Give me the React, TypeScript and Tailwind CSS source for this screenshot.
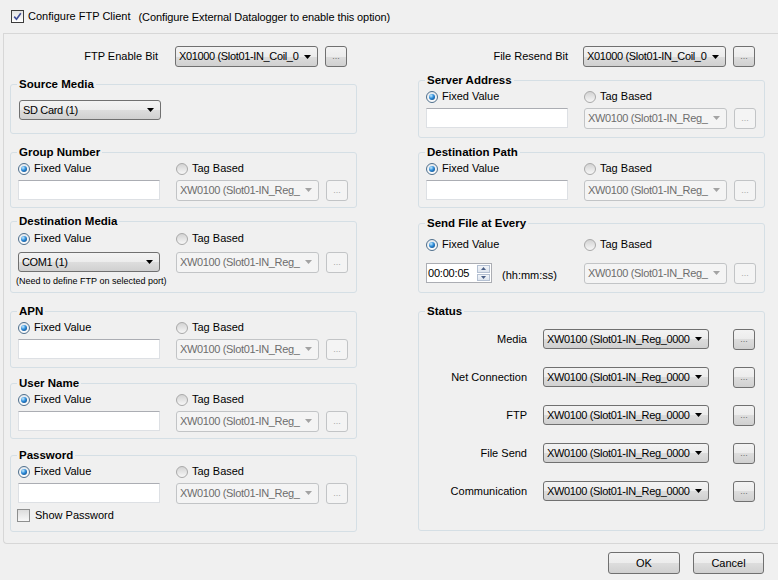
import type { ReactNode } from "react";

const GRAD = "bg-[linear-gradient(#f3f3f3_0%,#ececec_50%,#dddddd_50%,#d0d0d0_100%)]";
const TAG = "XW0100 (Slot01-IN_Reg_";
const STATUS = "XW0100 (Slot01-IN_Reg_0000";
const COIL = "X01000 (Slot01-IN_Coil_0";

function Arrow({ color }: { color: string }) {
  return (
    <svg width="7" height="4" viewBox="0 0 7 4" className="shrink-0">
      <polygon points="0,0 7,0 3.5,4" fill={color} />
    </svg>
  );
}

function Combo({ text, w = "w-[143px]", h = "h-[21px]", disabled = false }: { text: string; w?: string; h?: string; disabled?: boolean }) {
  return (
    <div
      className={`${w} ${h} flex shrink-0 items-center rounded-[3px] border pr-[6px] ${
        disabled ? "border-[#c2c4c6] bg-[#f4f4f4] text-[#6d6d6d]" : `border-[#707070] ${GRAD} text-black`
      }`}
    >
      <span className="flex-1 whitespace-nowrap pl-[3px] tracking-[-0.35px]">{text}</span>
      <Arrow color={disabled ? "#a3a3a3" : "#000"} />
    </div>
  );
}

function Dots({ disabled = false }: { disabled?: boolean }) {
  return (
    <div
      className={`flex h-[21px] w-[22px] shrink-0 items-end justify-center rounded-[3px] border pb-[5px] text-[9px] leading-none ${
        disabled ? "border-[#c2c4c6] bg-[#f4f4f4] text-[#a8a8a8]" : `border-[#707070] ${GRAD} text-[#707070]`
      }`}
    >
      ...
    </div>
  );
}

function Radio({ label, checked = false }: { label: string; checked?: boolean }) {
  return (
    <div className="flex h-[13px] items-center gap-[4px]">
      <span
        className={`flex h-[12px] w-[12px] items-center justify-center rounded-full border ${
          checked ? "border-[#4f6f8c] bg-[linear-gradient(#e4e9ee,#fdfdfd)]" : "border-[#a9a9a9] bg-[linear-gradient(#d3d3d3,#f7f7f7)]"
        }`}
      >
        {checked && <span className="h-[6px] w-[6px] rounded-full bg-[radial-gradient(circle_at_35%_30%,#c4ebff,#2b8ad8_45%,#0b3a70)]" />}
      </span>
      <span>{label}</span>
    </div>
  );
}

function TextBox({ w = "w-[142px]" }: { w?: string }) {
  return <div className={`${w} h-[20px] shrink-0 border border-[#dde0e4] border-t-[#abadb3] bg-white`} />;
}

function Group({ title, className, children }: { title: string; className: string; children: ReactNode }) {
  return (
    <fieldset className={`rounded-[3px] border border-[#d5dfe5] ${className}`}>
      <legend className="ml-[6px] px-[2px] text-[11.5px] leading-[14px] font-bold">{title}</legend>
      {children}
    </fieldset>
  );
}

function TagFields({ pt = "pt-[3px]", gap = "gap-y-[4px]", left }: { pt?: string; gap?: string; left?: ReactNode }) {
  return (
    <div className={`grid grid-cols-[158px_auto] pl-[7px] ${pt} ${gap}`}>
      <Radio checked label="Fixed Value" />
      <Radio label="Tag Based" />
      <div className="flex h-[22px] items-center">{left ?? <TextBox />}</div>
      <div className="flex h-[22px] items-center gap-[7px]">
        <Combo disabled text={TAG} />
        <Dots disabled />
      </div>
    </div>
  );
}

function StatusRow({ label }: { label: string }) {
  return (
    <div className="flex h-[22px] items-center">
      <span className="w-[108px] text-right">{label}</span>
      <div className="ml-[16px]">
        <Combo w="w-[166px]" h="h-[20px]" text={STATUS} />
      </div>
      <div className="ml-[24px]">
        <Dots />
      </div>
    </div>
  );
}

function WinButton({ label, w }: { label: string; w: string }) {
  return (
    <div className={`${w} flex h-[22px] items-center justify-center rounded-[3px] border border-[#707070] ${GRAD}`}>{label}</div>
  );
}

export default function App() {
  return (
    <div className="relative h-[580px] w-[778px] overflow-hidden bg-[#f0f0f0] font-['Liberation_Sans',Arial,sans-serif] text-[11px] text-black">
      {/* top option */}
      <div className="flex h-[33px] items-center pl-[11px]">
        <span className="flex h-[13px] w-[13px] items-center justify-center border border-[#3c3c3c] bg-[linear-gradient(#e2e2e2,#ffffff)]">
          <svg width="9" height="9" viewBox="0 0 9 9">
            <path d="M1.2 4.6 L3.5 7.2 L7.8 1.2" fill="none" stroke="#3d4c96" strokeWidth="1.6" />
          </svg>
        </span>
        <span className="ml-[4px]">Configure FTP Client</span>
        <span className="ml-[8px] mt-[2px] tracking-[-0.1px]">(Configure External Datalogger to enable this option)</span>
      </div>

      {/* main panel */}
      <div className="ml-[3px] flex h-[511px] w-[800px] gap-[61px] rounded-bl-[4px] border-y border-l border-[#d7d7d7] pl-[6px]">
        {/* left column */}
        <div className="flex w-[347px] flex-col">
          <div className="mt-[12px] flex h-[21px] items-center">
            <span className="w-[148px] text-right">FTP Enable Bit</span>
            <div className="ml-[17px]">
              <Combo text={COIL} />
            </div>
            <div className="ml-[7px]">
              <Dots />
            </div>
          </div>

          <Group title="Source Media" className="mt-[10px] h-[57px]">
            <div className="pl-[8px] pt-[9px]">
              <Combo w="w-[142px]" h="h-[20px]" text="SD Card (1)" />
            </div>
          </Group>

          <Group title="Group Number" className="mt-[11px] h-[63px]">
            <TagFields />
          </Group>

          <Group title="Destination Media" className="mt-[6px] h-[79px]">
            <TagFields pt="pt-[4px]" gap="gap-y-[6px]" left={<Combo w="w-[142px]" h="h-[20px]" text="COM1 (1)" />} />
            <div className="mt-[2px] pl-[5px] text-[9px] leading-[12px]">(Need to define FTP on selected port)</div>
          </Group>

          <Group title="APN" className="mt-[11px] h-[64px]">
            <TagFields />
          </Group>

          <Group title="User Name" className="mt-[8px] h-[63px]">
            <TagFields />
          </Group>

          <Group title="Password" className="mt-[9px] h-[84px]">
            <TagFields />
            <div className="mt-[5px] flex h-[13px] items-center gap-[5px] pl-[6px]">
              <span className="h-[13px] w-[13px] border border-[#8e8f8f] bg-[linear-gradient(#dcdcdc,#f8f8f8)]" />
              <span>Show Password</span>
            </div>
          </Group>
        </div>

        {/* right column */}
        <div className="flex w-[347px] flex-col">
          <div className="mt-[12px] flex h-[21px] items-center">
            <span className="w-[150px] text-right">File Resend Bit</span>
            <div className="ml-[15px]">
              <Combo text={COIL} />
            </div>
            <div className="ml-[7px]">
              <Dots />
            </div>
          </div>

          <Group title="Server Address" className="mt-[6px] h-[65px]">
            <TagFields />
          </Group>

          <Group title="Destination Path" className="mt-[7px] h-[63px]">
            <TagFields />
          </Group>

          <Group title="Send File at Every" className="mt-[8px] h-[77px]">
            <TagFields
              pt="pt-[8px]"
              gap="gap-y-[11px]"
              left={
                <div className="flex items-center">
                  <div className="flex h-[20px] w-[66px] items-stretch border border-[#abadb3] bg-white">
                    <span className="flex flex-1 items-center pl-[1px] tracking-[-0.2px]">00:00:05</span>
                    <div className="flex w-[15px] flex-col gap-[1px] p-[1px]">
                      <div className="flex flex-1 items-center justify-center border border-[#b4c0d2] bg-[linear-gradient(#f2f5f9,#dde4ee)]">
                        <svg width="5" height="3" viewBox="0 0 5 3">
                          <polygon points="0,3 5,3 2.5,0" fill="#4a5f86" />
                        </svg>
                      </div>
                      <div className="flex flex-1 items-center justify-center border border-[#b4c0d2] bg-[linear-gradient(#f2f5f9,#dde4ee)]">
                        <svg width="5" height="3" viewBox="0 0 5 3">
                          <polygon points="0,0 5,0 2.5,3" fill="#4a5f86" />
                        </svg>
                      </div>
                    </div>
                  </div>
                  <span className="ml-[10px] mt-[4px]">(hh:mm:ss)</span>
                </div>
              }
            />
          </Group>

          <Group title="Status" className="mt-[11px] h-[227px]">
            <div className="flex flex-col gap-[16px] pt-[10px]">
              <StatusRow label="Media" />
              <StatusRow label="Net Connection" />
              <StatusRow label="FTP" />
              <StatusRow label="File Send" />
              <StatusRow label="Communication" />
            </div>
          </Group>
        </div>
      </div>

      {/* dialog buttons */}
      <div className="flex justify-end gap-[13px] pr-[14px] pt-[8px]">
        <WinButton label="OK" w="w-[72px]" />
        <WinButton label="Cancel" w="w-[71px]" />
      </div>
    </div>
  );
}
